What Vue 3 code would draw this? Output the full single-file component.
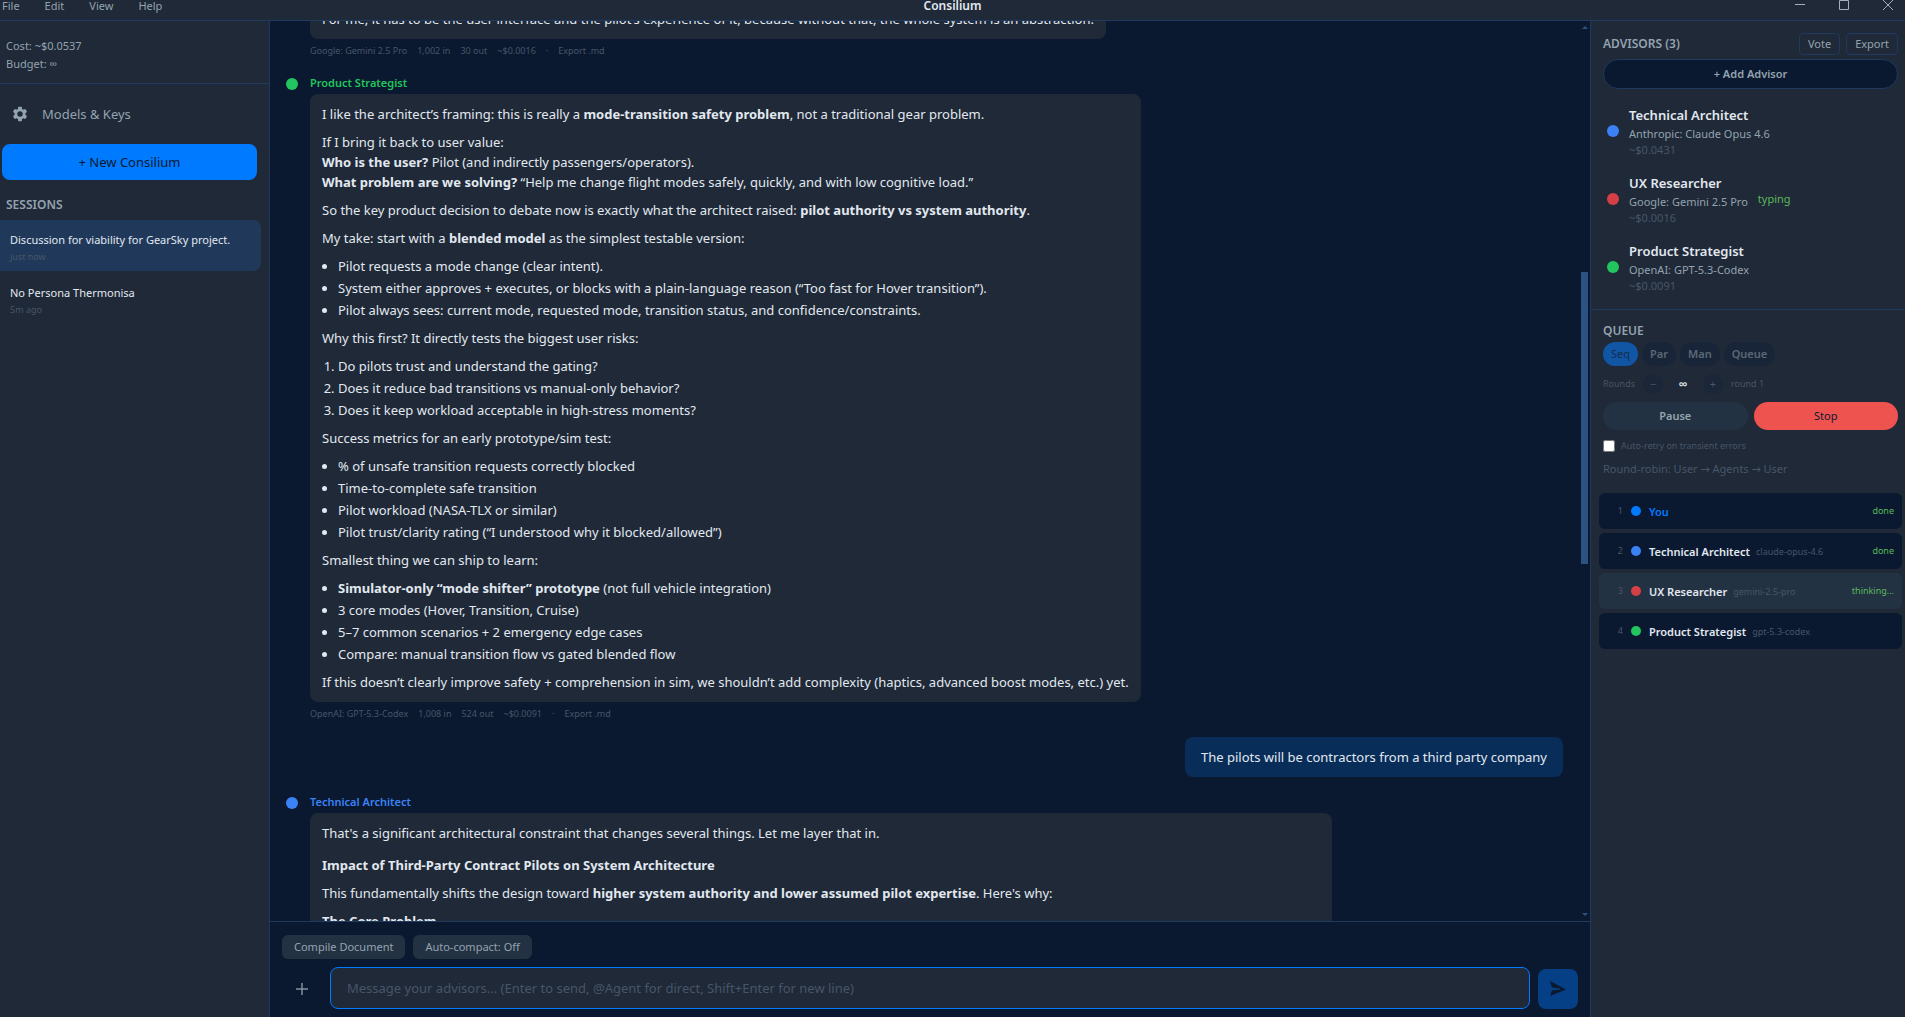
<template>
  <div class="app">
    <header class="titlebar">
      <nav class="menu">
        <button v-for="item in menuItems" :key="item" type="button" class="menu-item">{{ item }}</button>
      </nav>
      <h1 class="title">Consilium</h1>
      <div class="window-controls">
        <button type="button" class="window-button" aria-label="Minimize">
          <svg width="12" height="12" viewBox="0 0 12 12"><path d="M1 5.5H11" /></svg>
        </button>
        <button type="button" class="window-button" aria-label="Maximize">
          <svg width="12" height="12" viewBox="0 0 12 12"><path d="M1.5 1.5H10.5V10.5H1.5Z" /></svg>
        </button>
        <button type="button" class="window-button" aria-label="Close">
          <svg width="12" height="12" viewBox="0 0 12 12"><path d="M1 1L11 11M11 1L1 11" /></svg>
        </button>
      </div>
    </header>

    <div class="workspace">
      <aside class="sidebar">
        <div class="costs">
          <div>Cost: ~$0.0537</div>
          <div>Budget: ∞</div>
        </div>
        <button type="button" class="models-button">
          <svg width="18" height="18" viewBox="0 0 24 24" fill="currentColor">
            <path d="M19.14 12.94c.04-.3.06-.61.06-.94 0-.32-.02-.64-.07-.94l2.03-1.58a.49.49 0 0 0 .12-.61l-1.92-3.32a.488.488 0 0 0-.59-.22l-2.39.96c-.5-.38-1.03-.7-1.62-.94l-.36-2.54a.484.484 0 0 0-.48-.41h-3.84c-.24 0-.43.17-.47.41l-.36 2.54c-.59.24-1.13.57-1.62.94l-2.39-.96c-.22-.08-.47 0-.59.22L2.74 8.87c-.12.21-.08.47.12.61l2.03 1.58c-.05.3-.09.63-.09.94s.02.64.07.94l-2.03 1.58a.49.49 0 0 0-.12.61l1.92 3.32c.12.22.37.29.59.22l2.39-.96c.5.38 1.03.7 1.62.94l.36 2.54c.05.24.24.41.48.41h3.84c.24 0 .44-.17.47-.41l.36-2.54c.59-.24 1.13-.56 1.62-.94l2.39.96c.22.08.47 0 .59-.22l1.92-3.32c.12-.22.07-.47-.12-.61l-2.01-1.58zM12 15.6A3.6 3.6 0 1 1 12 8.4a3.6 3.6 0 0 1 0 7.2z" />
          </svg>
          <span>Models &amp; Keys</span>
        </button>
        <button type="button" class="new-button">+ New Consilium</button>
        <h2 class="section-title sessions-title">SESSIONS</h2>
        <button
          v-for="session in sessions"
          :key="session.title"
          type="button"
          class="session"
          :class="{ active: session.title === activeSession }"
          @click="activeSession = session.title"
        >
          <span class="session-name">{{ session.title }}</span>
          <span class="session-time">{{ session.time }}</span>
        </button>
      </aside>

      <main class="chat">
        <div class="chat-body">
          <div ref="messageList" class="messages">
            <article v-for="(message, i) in messages" :key="i" class="message" :class="{ own: message.own, wide: message.wide }">
              <span v-if="!message.own" class="dot avatar" :class="message.color"></span>
              <div class="message-content">
                <div v-if="!message.own" class="author" :class="message.color">{{ message.author }}</div>
                <div class="bubble">
                  <template v-for="(block, j) in message.blocks" :key="j">
                    <component :is="block.type" v-if="block.items">
                      <li v-for="item in block.items" :key="item" v-html="formatInline(item)"></li>
                    </component>
                    <component :is="block.type" v-else v-html="formatInline(block.text)"></component>
                  </template>
                </div>
                <div v-if="message.meta" class="meta">
                  <span v-for="part in message.meta" :key="part">{{ part }}</span>
                  <span>·</span>
                  <a href="#" class="export-link">Export .md</a>
                </div>
              </div>
            </article>
          </div>
          <div class="scrollbar">
            <span class="arrow up"></span>
            <div class="track"><div class="thumb"></div></div>
            <span class="arrow down"></span>
          </div>
        </div>

        <footer class="composer">
          <div class="composer-tools">
            <button type="button" class="tool-button">Compile Document</button>
            <button type="button" class="tool-button">Auto-compact: Off</button>
          </div>
          <form class="composer-row" @submit.prevent="draft = ''">
            <button type="button" class="attach-button" aria-label="Attach">
              <svg width="14" height="14" viewBox="0 0 14 14"><path d="M7 1V13M1 7H13" /></svg>
            </button>
            <textarea
              v-model="draft"
              rows="1"
              class="composer-input"
              aria-label="Message"
              placeholder="Message your advisors... (Enter to send, @Agent for direct, Shift+Enter for new line)"
            ></textarea>
            <button type="submit" class="send-button" aria-label="Send">
              <svg width="20" height="20" viewBox="0 0 20 20"><path d="M2 2L18 10.5L2 17L4 11.5L12 10.5V9.5L4 8.5Z" /></svg>
            </button>
          </form>
        </footer>
      </main>

      <aside class="panel">
        <section class="advisors">
          <div class="panel-head">
            <h2 class="section-title">ADVISORS (3)</h2>
            <button type="button" class="outline-button">Vote</button>
            <button type="button" class="outline-button">Export</button>
          </div>
          <button type="button" class="add-button">+ Add Advisor</button>
          <div v-for="advisor in advisors" :key="advisor.name" class="advisor">
            <span class="dot" :class="advisor.color"></span>
            <div class="advisor-info">
              <div class="advisor-name">{{ advisor.name }}</div>
              <div class="advisor-model">{{ advisor.model }}</div>
              <div class="advisor-cost">{{ advisor.cost }}</div>
            </div>
            <span v-if="advisor.typing" class="typing">typing</span>
          </div>
        </section>

        <section class="queue">
          <h2 class="section-title">QUEUE</h2>
          <div class="modes">
            <button
              v-for="item in modes"
              :key="item"
              type="button"
              class="mode"
              :class="{ selected: item === mode }"
              @click="mode = item"
            >{{ item }}</button>
          </div>
          <div class="rounds">
            <span>Rounds</span>
            <button type="button" class="round-button" aria-label="Fewer rounds">−</button>
            <span class="round-count">∞</span>
            <button type="button" class="round-button" aria-label="More rounds">+</button>
            <span>round 1</span>
          </div>
          <div class="run-controls">
            <button type="button" class="run-button">Pause</button>
            <button type="button" class="run-button stop">Stop</button>
          </div>
          <label class="retry">
            <input v-model="autoRetry" type="checkbox" class="retry-box" />
            <span>Auto-retry on transient errors</span>
          </label>
          <p class="hint">Round-robin: User → Agents → User</p>
        </section>

        <ol class="queue-list">
          <li v-for="(entry, i) in queue" :key="entry.name" class="queue-item" :class="{ current: entry.status === 'thinking...' }">
            <span class="queue-number">{{ i + 1 }}</span>
            <span class="dot small" :class="entry.color"></span>
            <span class="queue-name" :class="{ you: entry.name === 'You' }">{{ entry.name }}</span>
            <span class="queue-model">{{ entry.model }}</span>
            <span class="queue-status">{{ entry.status }}</span>
          </li>
        </ol>
      </aside>
    </div>
  </div>
</template>

<script setup>
import { ref, onMounted } from 'vue';

const menuItems = ['File', 'Edit', 'View', 'Help'];

const sessions = [
  { title: 'Discussion for viability for GearSky project.', time: 'just now' },
  { title: 'No Persona Thermonisa', time: '5m ago' },
];

const advisors = [
  { name: 'Technical Architect', model: 'Anthropic: Claude Opus 4.6', cost: '~$0.0431', color: 'blue' },
  { name: 'UX Researcher', model: 'Google: Gemini 2.5 Pro', cost: '~$0.0016', color: 'red', typing: true },
  { name: 'Product Strategist', model: 'OpenAI: GPT-5.3-Codex', cost: '~$0.0091', color: 'green' },
];

const modes = ['Seq', 'Par', 'Man', 'Queue'];

const queue = [
  { name: 'You', color: 'primary', status: 'done' },
  { name: 'Technical Architect', model: 'claude-opus-4.6', color: 'blue', status: 'done' },
  { name: 'UX Researcher', model: 'gemini-2.5-pro', color: 'red', status: 'thinking...' },
  { name: 'Product Strategist', model: 'gpt-5.3-codex', color: 'green' },
];

const messages = [
  {
    author: 'UX Researcher',
    color: 'red',
    blocks: [
      { type: 'p', text: 'For me, it has to be the user interface and the pilot’s experience of it, because without that, the whole system is an abstraction.' },
    ],
    meta: ['Google: Gemini 2.5 Pro', '1,002 in', '30 out', '~$0.0016'],
  },
  {
    author: 'Product Strategist',
    color: 'green',
    blocks: [
      { type: 'p', text: 'I like the architect’s framing: this is really a **mode-transition safety problem**, not a traditional gear problem.' },
      { type: 'p', text: 'If I bring it back to user value:\n**Who is the user?** Pilot (and indirectly passengers/operators).\n**What problem are we solving?** “Help me change flight modes safely, quickly, and with low cognitive load.”' },
      { type: 'p', text: 'So the key product decision to debate now is exactly what the architect raised: **pilot authority vs system authority**.' },
      { type: 'p', text: 'My take: start with a **blended model** as the simplest testable version:' },
      {
        type: 'ul',
        items: [
          'Pilot requests a mode change (clear intent).',
          'System either approves + executes, or blocks with a plain-language reason (“Too fast for Hover transition”).',
          'Pilot always sees: current mode, requested mode, transition status, and confidence/constraints.',
        ],
      },
      { type: 'p', text: 'Why this first? It directly tests the biggest user risks:' },
      {
        type: 'ol',
        items: [
          'Do pilots trust and understand the gating?',
          'Does it reduce bad transitions vs manual-only behavior?',
          'Does it keep workload acceptable in high-stress moments?',
        ],
      },
      { type: 'p', text: 'Success metrics for an early prototype/sim test:' },
      {
        type: 'ul',
        items: [
          '% of unsafe transition requests correctly blocked',
          'Time-to-complete safe transition',
          'Pilot workload (NASA-TLX or similar)',
          'Pilot trust/clarity rating (“I understood why it blocked/allowed”)',
        ],
      },
      { type: 'p', text: 'Smallest thing we can ship to learn:' },
      {
        type: 'ul',
        items: [
          '**Simulator-only “mode shifter” prototype** (not full vehicle integration)',
          '3 core modes (Hover, Transition, Cruise)',
          '5–7 common scenarios + 2 emergency edge cases',
          'Compare: manual transition flow vs gated blended flow',
        ],
      },
      { type: 'p', text: 'If this doesn’t clearly improve safety + comprehension in sim, we shouldn’t add complexity (haptics, advanced boost modes, etc.) yet.' },
    ],
    meta: ['OpenAI: GPT-5.3-Codex', '1,008 in', '524 out', '~$0.0091'],
  },
  {
    own: true,
    blocks: [{ type: 'p', text: 'The pilots will be contractors from a third party company' }],
  },
  {
    author: 'Technical Architect',
    color: 'blue',
    wide: true,
    blocks: [
      { type: 'p', text: "That's a significant architectural constraint that changes several things. Let me layer that in." },
      { type: 'h3', text: 'Impact of Third-Party Contract Pilots on System Architecture' },
      { type: 'p', text: "This fundamentally shifts the design toward **higher system authority and lower assumed pilot expertise**. Here's why:" },
      { type: 'p', text: '**The Core Problem**' },
    ],
  },
];

const activeSession = ref(sessions[0].title);
const mode = ref('Seq');
const autoRetry = ref(false);
const draft = ref('');
const messageList = ref(null);

// only **bold** and line breaks are supported in messages
const formatInline = (text) =>
  text.replace(/\*\*(.+?)\*\*/g, '<strong>$1</strong>').replace(/\n/g, '<br>');

onMounted(() => {
  messageList.value.scrollTop = 58;
});
</script>

<style>
body {
  margin: 0;
  background: #0a192f;
}
</style>

<style scoped>
.app {
  display: flex;
  flex-direction: column;
  height: 100vh;
  overflow: hidden;
  background: #0a192f;
  color: #e2e8f0;
  font-family: "Noto Sans", "Open Sans", "DejaVu Sans", sans-serif;
  font-size: 13px;
  line-height: 20px;
}

button {
  padding: 0;
  border: none;
  background: none;
  color: #94a3b0;
  font: inherit;
  cursor: pointer;
}

h1,
h2,
p {
  margin: 0;
}

svg {
  display: block;
}

.dot {
  flex: none;
  width: 12px;
  height: 12px;
  border-radius: 50%;

  &.small {
    width: 10px;
    height: 10px;
  }
  &.primary {
    background: #007bff;
  }
  &.blue {
    background: #3b82f6;
  }
  &.red {
    background: #d64045;
  }
  &.green {
    background: #22c55e;
  }
}

/* Title bar */
.titlebar {
  display: grid;
  grid-template-columns: 1fr auto 1fr;
  flex: none;
  height: 20px;
  border-bottom: 1px solid #1e3a5f;
  background: #1f2937;
}

.menu {
  display: flex;
  gap: 25px;
  padding-left: 2px;
}

.menu-item,
.title {
  height: 12px;
  font-size: 11px;
  line-height: 12px;
}

.title {
  color: #e2e8f0;
  font-size: 12px;
  font-weight: 600;
}

.window-controls {
  display: flex;
  justify-content: flex-end;
  gap: 32px;
  height: 11px;
  padding-right: 11px;
}

.window-button {
  height: 10px;

  svg {
    margin-top: -1px;
    fill: none;
    stroke: #a3afba;
  }
}

.workspace {
  display: flex;
  flex: 1;
  min-height: 0;
}

.section-title {
  color: #94a3b0;
  font-size: 12px;
  font-weight: 600;
  line-height: 18px;
}

/* Sidebar */
.sidebar {
  flex: none;
  box-sizing: border-box;
  width: 270px;
  border-right: 1px solid #1e3a5f;
  background: #1f2937;
}

.costs {
  padding: 16px 6px 10px;
  border-bottom: 1px solid #1e3a5f;
  color: #94a3b0;
  font-size: 11px;
  line-height: 18px;
}

.models-button {
  display: flex;
  align-items: center;
  gap: 13px;
  width: 100%;
  height: 60px;
  padding-left: 11px;
}

.new-button {
  display: block;
  width: 255px;
  height: 36px;
  margin-left: 2px;
  border-radius: 8px;
  background: #007bff;
  color: #0a192f;
}

.sessions-title {
  padding: 16px 6px 6px;
}

.session {
  display: flex;
  flex-direction: column;
  width: 261px;
  padding: 11px 10px 6px;
  margin-bottom: 2px;
  border-radius: 0 8px 8px 0;
  text-align: left;

  &.active {
    background: #20395a;
  }
}

.session-name {
  color: #e2e8f0;
  font-size: 11px;
  line-height: 18px;
}

.session-time {
  color: #475569;
  font-size: 9px;
  line-height: 16px;
}

/* Chat */
.chat {
  display: flex;
  flex: 1;
  flex-direction: column;
  min-width: 0;
}

.chat-body {
  display: flex;
  flex: 1;
  min-height: 0;
}

.messages {
  flex: 1;
  min-width: 0;
  padding: 16px;
  overflow-y: auto;
  scrollbar-width: none;
}

.message {
  display: flex;
  gap: 12px;
  margin-bottom: 16px;

  &.own {
    justify-content: flex-end;
  }
}

.avatar {
  margin-top: 4px;
}

.message-content {
  max-width: 80%;
}

.wide .message-content {
  width: 80%;
}

.author {
  margin-bottom: 2px;
  font-size: 11px;
  font-weight: 600;
  line-height: 18px;

  &.red {
    color: #d64045;
  }
  &.green {
    color: #22c55e;
  }
  &.blue {
    color: #3b82f6;
  }
}

.bubble {
  width: fit-content;
  padding: 10px 12px;
  border-radius: 8px;
  background: #1f2937;

  h3 {
    margin: 12px 0 8px;
    font-size: 13px;
    font-weight: 700;
  }
  p + p,
  ul,
  ol,
  ul + p,
  ol + p {
    margin: 8px 0 0;
  }
  ul,
  ol {
    padding-left: 16px;
  }
  li + li {
    margin-top: 2px;
  }
  :deep(strong) {
    font-weight: 700;
  }
}

.own .bubble {
  padding: 10px 16px;
  background: #082d59;
}

.wide .bubble {
  box-sizing: border-box;
  width: 100%;
}

.meta {
  display: flex;
  gap: 10px;
  margin-top: 5px;
  color: #475569;
  font-size: 9px;
  line-height: 14px;
}

.export-link {
  color: inherit;
  text-decoration: none;
}

.scrollbar {
  display: flex;
  flex: none;
  flex-direction: column;
  align-items: center;
  width: 11px;
  padding: 5px 0;
}

.arrow {
  border: 3px solid transparent;

  &.up {
    border-top: none;
    border-bottom-color: #2c5282;
  }
  &.down {
    border-bottom: none;
    border-top-color: #2c5282;
  }
}

.track {
  display: flex;
  flex: 1;
  flex-direction: column;
  width: 7px;
}

.thumb {
  height: 33%;
  margin-top: 243px;
  background: #2c5282;
}

/* Composer */
.composer {
  padding: 13px 12px 8px;
  border-top: 1px solid #1e3a5f;
}

.composer-tools {
  display: flex;
  gap: 8px;
  margin-bottom: 8px;
}

.tool-button {
  height: 24px;
  padding: 0 12px;
  border-radius: 6px;
  background: #233242;
  font-size: 11px;
}

.composer-row {
  display: flex;
  align-items: flex-end;
  gap: 8px;
}

.attach-button,
.send-button {
  display: flex;
  align-items: center;
  justify-content: center;
  flex: none;
  width: 40px;
  height: 40px;
  border-radius: 8px;
}

.attach-button svg {
  stroke: #8391a0;
  stroke-width: 1.5;
}

.send-button {
  background: #053f85;

  svg {
    fill: #0a192f;
  }
}

.composer-input {
  flex: 1;
  box-sizing: border-box;
  height: 42px;
  padding: 10px 16px;
  border: 1px solid #007bff;
  border-radius: 8px;
  outline: none;
  background: #1f2937;
  color: #e2e8f0;
  font: inherit;
  resize: none;

  &::placeholder {
    color: #475569;
  }
}

/* Right panel */
.panel {
  flex: none;
  box-sizing: border-box;
  width: 315px;
  border-left: 1px solid #1e3a5f;
  background: #1f2937;
}

.advisors {
  padding: 12px 7px 8px 12px;
  border-bottom: 1px solid #1e3a5f;
}

.panel-head {
  display: flex;
  align-items: center;
  gap: 6px;
  margin-bottom: 4px;

  .section-title {
    flex: 1;
    line-height: 20px;
  }
}

.outline-button {
  height: 22px;
  padding: 0 8px;
  border: 1px solid #1e3a5f;
  border-radius: 4px;
  font-size: 11px;
  line-height: 20px;
}

.add-button {
  width: 100%;
  height: 30px;
  margin-bottom: 8px;
  border: 1px solid #1e3a5f;
  border-radius: 15px;
  background: #0a192f;
  font-size: 11px;
  font-weight: 600;
}

.advisor {
  display: flex;
  align-items: center;
  gap: 10px;
  height: 68px;
  padding-left: 4px;
}

.advisor-name {
  font-weight: 600;
}

.advisor-model,
.typing {
  color: #94a3b0;
  font-size: 11px;
  line-height: 18px;
}

.advisor-cost {
  color: #475569;
  font-size: 11px;
  line-height: 14px;
}

.typing {
  color: #5cb85c;
}

.queue {
  padding: 12px 7px 15px 12px;
}

.modes {
  display: flex;
  gap: 4px;
  margin: 2px 0 8px;
}

.mode {
  height: 24px;
  padding: 0 8px;
  border-radius: 12px;
  background: #182538;
  color: #5a6876;
  font-size: 11px;
  font-weight: 600;

  &.selected {
    background: #1155a5;
    color: #132e50;
    font-weight: 400;
  }
}

.rounds {
  display: flex;
  align-items: center;
  gap: 8px;
  margin-bottom: 8px;
  color: #475569;
  font-size: 9px;
}

.round-button {
  width: 20px;
  height: 20px;
  border-radius: 50%;
  background: #1b2638;
  color: #475569;
  font-size: 11px;
}

.round-count {
  width: 24px;
  color: #e2e8f0;
  font-size: 13px;
  font-weight: 600;
  text-align: center;
}

.run-controls {
  display: flex;
  gap: 6px;
}

.run-button {
  flex: 1;
  height: 28px;
  border-radius: 14px;
  background: #233242;
  font-size: 11px;
  font-weight: 600;

  &.stop {
    background: #ef5350;
    color: #0a192f;
    font-weight: 400;
  }
}

.retry {
  display: flex;
  align-items: center;
  gap: 6px;
  margin: 8px 0 6px;
  height: 16px;
  color: #475569;
  font-size: 9px;
}

.retry-box {
  width: 12px;
  height: 12px;
  margin: 0;
}

.hint {
  color: #475569;
  font-size: 11px;
  line-height: 18px;
}

.queue-list {
  display: flex;
  flex-direction: column;
  gap: 4px;
  margin: 0;
  padding: 0 3px 0 8px;
  list-style: none;
}

.queue-item {
  display: flex;
  align-items: center;
  box-sizing: border-box;
  height: 36px;
  padding: 0 8px 0 16px;
  border-radius: 6px;
  background: #0a192f;
  color: #475569;
  font-size: 9px;

  &.current {
    background: #233242;
  }
}

.queue-number {
  width: 8px;
  margin-right: 8px;
  text-align: right;
}

.queue-name,
.queue-model {
  padding-top: 2px;
}

.queue-name {
  margin: 0 6px 0 8px;
  color: #e2e8f0;
  font-size: 11px;
  font-weight: 600;

  &.you {
    color: #007bff;
  }
}

.queue-status {
  margin-left: auto;
  color: #5cb85c;
}
</style>
